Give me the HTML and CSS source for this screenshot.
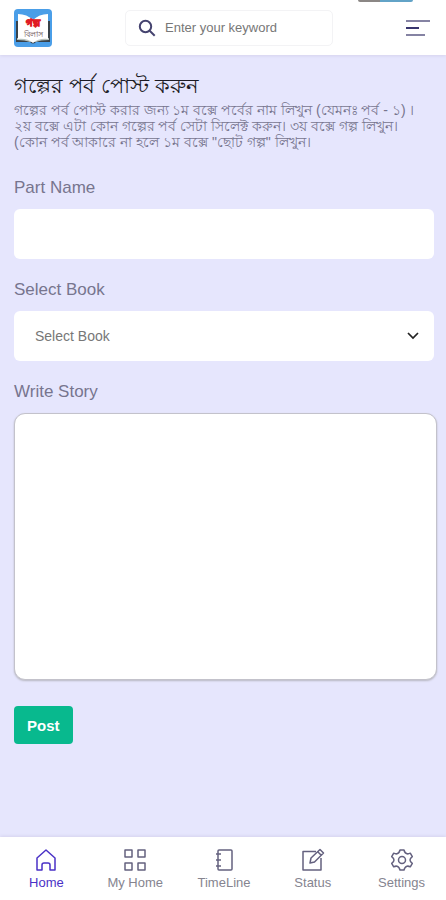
FILE: index.html
```html
<!DOCTYPE html>
<html lang="bn">
<head>
<meta charset="utf-8">
<meta name="viewport" content="width=device-width, initial-scale=1">
<title>গল্পের পর্ব পোস্ট করুন</title>
<link rel="stylesheet" href="styles.css">
</head>
<body>
<header class="topbar">
  <a class="logo" href="#" aria-label="Logo">
    <svg viewBox="0 0 38 38" width="38" height="38">
      <rect width="38" height="38" rx="4" fill="#4a9ee8"/>
      <path d="M2 12h34v21H22q-3 3-6 0H2z" fill="#38424a"/>
      <path d="M3 29q9-1 16 4 7-5 16-4v2q-9 0-13 2h-6q-5-2-13-2z" fill="#b8c2bd"/>
      <path d="M4 5q9 0 15 6Q25 5 34 5v25q-9-1-15 4Q13 29 4 30z" fill="#fff"/>
      <text class="logo-title" x="19" y="17" text-anchor="middle">গল্প</text>
      <text class="logo-sub" x="19" y="28" text-anchor="middle">বিলাস</text>
    </svg>
  </a>
  <form class="search">
    <svg viewBox="0 0 18 18" width="18" height="18" fill="none" stroke="#45436f" stroke-width="2"><circle cx="7.500" cy="7.500" r="5.700"/><path d="M11.700 11.700l5 5"/></svg>
    <input type="search" placeholder="Enter your keyword" aria-label="Search">
  </form>
  <button class="menu" type="button" aria-label="Menu">
    <svg viewBox="0 0 24 18" width="24" height="18" fill="none" stroke-width="2"><path d="M0 2h24M0 16h19" stroke="#8583a3"/><path d="M0 9h13" stroke="#38356e"/></svg>
  </button>
  <span class="tab-edge"></span>
</header>
<main class="content">
  <h1>গল্পের পর্ব পোস্ট করুন</h1>
  <p class="intro">গল্পের পর্ব পোস্ট করার জন্য ১ম বক্সে পর্বের নাম লিখুন (যেমনঃ পর্ব - ১) ।<br>২য় বক্সে এটা কোন গল্পের পর্ব সেটা সিলেক্ট করুন। ৩য় বক্সে গল্প লিখুন।<br>(কোন পর্ব আকারে না হলে ১ম বক্সে "ছোট গল্প" লিখুন।</p>
  <form class="post-form">
    <label for="part">Part Name</label>
    <input class="field" id="part" type="text">
    <label for="book">Select Book</label>
    <div class="select-wrap">
      <select class="field" id="book"><option>Select Book</option></select>
      <svg class="chevron" viewBox="0 0 12 8" width="12" height="8" fill="none" stroke="#222" stroke-width="1.700"><path d="M1 1l5 5 5-5"/></svg>
    </div>
    <label for="story">Write Story</label>
    <textarea id="story"></textarea>
    <button class="post" type="submit">Post</button>
  </form>
</main>
<nav class="bottom-nav">
  <a class="active" href="#">
    <svg viewBox="0 0 24 24"><path d="M3 10L12 2l9 8v12h-5v-5q0-2-2-2h-4q-2 0-2 2v5H3z"/></svg>
    <span>Home</span>
  </a>
  <a href="#">
    <svg viewBox="0 0 24 24"><path d="M2 2h7v7H2zM15 2h7v7h-7zM2 15h7v7H2zM15 15h7v7h-7z"/></svg>
    <span>My Home</span>
  </a>
  <a href="#">
    <svg viewBox="0 0 24 24"><path d="M7 2h12q1 0 1 1v18q0 1-1 1H7q-1 0-1-1V3q0-1 1-1zM4 6h5M4 12h5M4 18h5"/></svg>
    <span>TimeLine</span>
  </a>
  <a href="#">
    <svg viewBox="0 0 24 24"><path d="M15 3.500H2V22h18V10M9 15l1-5 9-8.500 3.500 3.500-9 9zM17 4l3 3"/></svg>
    <span>Status</span>
  </a>
  <a href="#">
    <svg viewBox="0 0 24 24"><circle cx="12" cy="12" r="3.500"/><path d="M10 2h4q.8 3.200 3 3.800 1.500.3 3.300-.6l2 3.500q-2.300 1.700-2.300 3.300t2.300 3.300l-2 3.500q-1.800-.9-3.300-.6-2.200.6-3 3.800h-4q-.8-3.200-3-3.800-1.500-.3-3.300.6l-2-3.500Q4 13.600 4 12T1.700 8.700l2-3.500q1.800.9 3.300.6 2.200-.6 3-3.800z"/></svg>
    <span>Settings</span>
  </a>
</nav>
</body>
</html>
```
FILE: styles.css
```css
* { box-sizing: border-box; }

body {
  margin: 0;
  min-height: 100vh;
  display: flex;
  flex-direction: column;
  background: #e6e6fd;
  color: #77758e;
  font-family: "Liberation Sans", Arial, sans-serif;
}

button, input, select, textarea { font: inherit; }

.topbar {
  position: relative;
  display: flex;
  align-items: center;
  justify-content: space-between;
  height: 55px;
  padding: 0 16px 0 14px;
  background: #fff;
  box-shadow: 0 1px 3px #d5d3ee;
}

.logo, .logo svg, .menu svg { display: block; }

.logo-title { font-size: 10px; font-weight: bold; fill: #e01b24; stroke: #e01b24; }
.logo-sub { font-size: 8px; fill: #5c4448; }

.search {
  display: flex;
  align-items: center;
  gap: 9px;
  width: 208px;
  height: 36px;
  padding: 0 12px;
  border: 1px solid #f3f3f5;
  border-radius: 5px;
}

.search svg { flex: none; }

.search input {
  flex: 1;
  min-width: 0;
  padding: 0;
  border: 0;
  outline: 0;
  background: none;
  font-size: 13px;
  appearance: none;
}

.search input::placeholder { color: #777; opacity: 1; }

.menu { padding: 0; border: 0; background: none; }

.tab-edge {
  position: absolute;
  top: 0;
  right: 33px;
  width: 55px;
  height: 2px;
  border-radius: 0 0 4px 4px;
  background: linear-gradient(90deg, #8b8785 40%, #62a3c7 40%);
}

.content { flex: 1; padding: 18px 12px 0 14px; }

h1 {
  margin: 0;
  color: #1c1b24;
  font-size: 21px;
  font-weight: 400;
  line-height: 26px;
}

.intro {
  margin: 3px 0 0;
  font-size: 14px;
  line-height: 16px;
}

.post-form { display: flex; flex-direction: column; margin-top: 27px; }

.post-form label { margin-bottom: 10px; font-size: 17px; line-height: 22px; }

.field {
  width: 100%;
  height: 50px;
  padding: 0 21px;
  border: 0;
  border-radius: 6px;
  background: #fff;
  color: #777;
  font-size: 14px;
  appearance: none;
}

input.field { margin: 0 0 20px; }

.select-wrap { position: relative; margin-bottom: 20px; }

.select-wrap .field { display: block; }

.chevron {
  position: absolute;
  top: 21px;
  right: 15px;
  pointer-events: none;
}

textarea {
  height: 267px;
  margin-right: -3px;
  padding: 12px;
  border: 1px solid #c3c2cb;
  border-radius: 11px;
  background: #fff;
  box-shadow: 0 1px 2px #b8b8c2;
  resize: none;
}

.post {
  align-self: flex-start;
  height: 38px;
  margin-top: 26px;
  padding: 0 13px;
  border: 0;
  border-radius: 4px;
  background: #08b98e;
  color: #fff;
  font-size: 15px;
  font-weight: 700;
}

.bottom-nav {
  display: grid;
  grid-template-columns: repeat(5, 1fr);
  height: 63px;
  padding: 11px 0 0 2px;
  background: #fff;
  box-shadow: 0 -1px 3px #d5d3ee;
}

.bottom-nav a {
  display: flex;
  flex-direction: column;
  align-items: center;
  gap: 3px;
  color: #85848f;
  font-size: 13px;
  line-height: 16px;
  text-decoration: none;
}

.bottom-nav svg {
  width: 24px;
  height: 24px;
  fill: none;
  stroke: #64617f;
  stroke-width: 1.5;
  stroke-linejoin: round;
}

.bottom-nav .active { color: #4a31c6; }
.bottom-nav .active svg { stroke: #4a31c6; }
```
